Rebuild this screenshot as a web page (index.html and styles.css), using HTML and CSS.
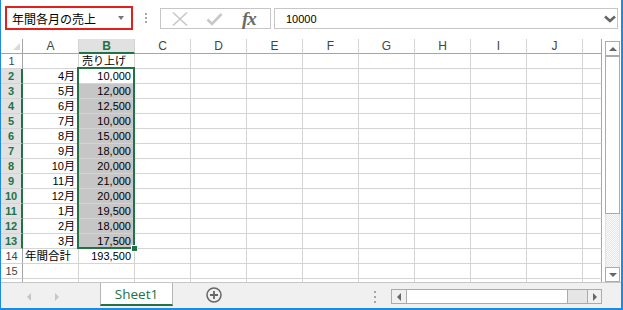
FILE: index.html
```html
<!DOCTYPE html>
<html lang="ja">
<head>
    <meta charset="UTF-8">
    <meta name="viewport" content="width=device-width, initial-scale=1.0">
    <title>年間各月の売上</title>
    <link rel="stylesheet" href="styles.css">
</head>
<body>
<div class="window">
    <div class="formula-bar">
        <div class="name-box">年間各月の売上<span class="drop"></span></div>
        <div class="grip"><i></i><i></i><i></i></div>
        <div class="fx-buttons">
            <svg class="btn-x" width="16" height="14" viewBox="0 0 16 14"><path d="M1 0.5 L15 13.5 M15 0.5 L1 13.5" stroke="#c8c8c8" stroke-width="1.5" fill="none"/></svg>
            <svg class="btn-ok" width="17" height="14" viewBox="0 0 17 14"><path d="M1.5 7.5 L6 12 L15.5 2" stroke="#c8c8c8" stroke-width="2.6" fill="none"/></svg>
            <span class="fx">fx</span>
        </div>
        <div class="formula-input">10000<svg class="chevron" width="12" height="8" viewBox="0 0 12 8"><polyline points="1,1.5 6,6 11,1.5" stroke="#666" stroke-width="2.6" fill="none"/></svg></div>
    </div>

    <div class="main">
        <div class="sheet">
            <div class="corner"></div><div class="hd">A</div><div class="hd on">B</div><div class="hd">C</div><div class="hd">D</div><div class="hd">E</div><div class="hd">F</div><div class="hd">G</div><div class="hd">H</div><div class="hd">I</div><div class="hd">J</div><div class="hd"></div>
            <div class="rh">1</div><div></div><div>売り上げ</div><div></div><div></div><div></div><div></div><div></div><div></div><div></div><div></div><div></div>
            <div class="rh on">2</div><div class="r">4月</div><div class="r">10,000</div><div></div><div></div><div></div><div></div><div></div><div></div><div></div><div></div><div></div>
            <div class="rh on">3</div><div class="r">5月</div><div class="r sel">12,000</div><div></div><div></div><div></div><div></div><div></div><div></div><div></div><div></div><div></div>
            <div class="rh on">4</div><div class="r">6月</div><div class="r sel">12,500</div><div></div><div></div><div></div><div></div><div></div><div></div><div></div><div></div><div></div>
            <div class="rh on">5</div><div class="r">7月</div><div class="r sel">10,000</div><div></div><div></div><div></div><div></div><div></div><div></div><div></div><div></div><div></div>
            <div class="rh on">6</div><div class="r">8月</div><div class="r sel">15,000</div><div></div><div></div><div></div><div></div><div></div><div></div><div></div><div></div><div></div>
            <div class="rh on">7</div><div class="r">9月</div><div class="r sel">18,000</div><div></div><div></div><div></div><div></div><div></div><div></div><div></div><div></div><div></div>
            <div class="rh on">8</div><div class="r">10月</div><div class="r sel">20,000</div><div></div><div></div><div></div><div></div><div></div><div></div><div></div><div></div><div></div>
            <div class="rh on">9</div><div class="r">11月</div><div class="r sel">21,000</div><div></div><div></div><div></div><div></div><div></div><div></div><div></div><div></div><div></div>
            <div class="rh on">10</div><div class="r">12月</div><div class="r sel">20,000</div><div></div><div></div><div></div><div></div><div></div><div></div><div></div><div></div><div></div>
            <div class="rh on">11</div><div class="r">1月</div><div class="r sel">19,500</div><div></div><div></div><div></div><div></div><div></div><div></div><div></div><div></div><div></div>
            <div class="rh on">12</div><div class="r">2月</div><div class="r sel">18,000</div><div></div><div></div><div></div><div></div><div></div><div></div><div></div><div></div><div></div>
            <div class="rh on">13</div><div class="r">3月</div><div class="r sel">17,500</div><div></div><div></div><div></div><div></div><div></div><div></div><div></div><div></div><div></div>
            <div class="rh">14</div><div class="jp">年間合計</div><div class="r">193,500</div><div></div><div></div><div></div><div></div><div></div><div></div><div></div><div></div><div></div>
            <div class="rh">15</div><div></div><div></div><div></div><div></div><div></div><div></div><div></div><div></div><div></div><div></div><div></div>
            <div class="rh"></div><div></div><div></div><div></div><div></div><div></div><div></div><div></div><div></div><div></div><div></div><div></div>
            <span class="sel-box"></span>
            <span class="fill-handle"></span>
        </div>
        <div class="vscroll">
            <div class="sb-btn"><span class="arr-up"></span></div>
            <div class="sb-thumb"></div>
            <div class="sb-track"></div>
            <div class="sb-btn"><span class="arr-down"></span></div>
        </div>
    </div>

    <div class="tab-bar">
        <span class="nav-left"></span>
        <span class="nav-right"></span>
        <div class="tab">Sheet1</div>
        <svg class="new-sheet" width="16" height="16" viewBox="0 0 16 16"><circle cx="8" cy="8" r="7" stroke="#666" stroke-width="1.5" fill="none"/><path d="M8 4 V12 M4 8 H12" stroke="#666" stroke-width="1.8"/></svg>
        <div class="grip tab-grip"><i></i><i></i><i></i></div>
        <div class="hscroll">
            <div class="hs-btn"><span class="arr-left"></span></div>
            <div class="hs-thumb"></div>
            <div class="hs-track"></div>
            <div class="hs-btn last"><span class="arr-right"></span></div>
        </div>
    </div>
</div>
</body>
</html>
```

FILE: styles.css
```css
body {
    margin: 0;
    background-color: white;
    font-family: "Noto Sans CJK JP", "Liberation Sans", sans-serif;
    font-size: 12px;
    color: black;
}
.window {
    width: 623px;
    height: 310px;
    box-sizing: border-box;
    border-left: 1px solid #1a8ce6;
    border-right: 2px solid #1a8ce6;
    border-bottom: 2px solid #1a8ce6;
    overflow: hidden;
}

/* formula bar */
.formula-bar {
    display: flex;
    align-items: flex-start;
    height: 39px;
    padding-left: 4px;
}
.name-box {
    display: flex;
    align-items: center;
    width: 128px;
    height: 24px;
    margin-top: 6px;
    padding-left: 5px;
    box-sizing: border-box;
    border: 2px solid #e2201c;
    font-size: 12px;
}
.drop {
    margin-left: auto;
    margin-right: 7px;
    border-top: 4px solid #777;
    border-left: 3.5px solid transparent;
    border-right: 3.5px solid transparent;
}
.grip {
    display: flex;
    flex-direction: column;
    gap: 2px;
    margin: 13px 0 0 12px;
}
.grip i {
    width: 2px;
    height: 2px;
    background-color: #a6a6a6;
}
.fx-buttons {
    display: flex;
    align-items: center;
    width: 111px;
    height: 21px;
    margin: 8px 0 0 13px;
    padding-left: 11px;
    box-sizing: border-box;
    border: 1px solid #c6c6c6;
}
.btn-ok { margin-left: 18px; }
.fx {
    margin-left: 19px;
    font-family: "Liberation Serif", serif;
    font-style: italic;
    font-weight: bold;
    font-size: 19px;
    line-height: 19px;
    color: #6a6a6a;
    letter-spacing: -1px;
}
.formula-input {
    display: flex;
    align-items: center;
    width: 344px;
    height: 21px;
    margin: 8px 0 0 3px;
    padding-left: 11px;
    box-sizing: border-box;
    border: 1px solid #c6c6c6;
    font-family: "Liberation Sans", sans-serif;
    font-size: 11px;
}
.chevron {
    margin-left: auto;
    margin-right: 1px;
}

/* grid */
.main {
    display: flex;
    height: 243px;
}
.sheet {
    position: relative;
    display: grid;
    grid-template-columns: 22px repeat(10, 56px) 19px;
    grid-auto-rows: 15px;
    width: 601px;
    height: 243px;
    overflow: hidden;
    font-family: "Liberation Sans", "Noto Sans CJK JP", sans-serif;
    font-size: 11px;
}
.sheet > div {
    box-sizing: border-box;
    border-right: 1px solid #d4d4d4;
    border-bottom: 1px solid #d4d4d4;
    padding: 0 3px;
    line-height: 14px;
    white-space: nowrap;
}
.sheet > div:nth-child(12n) { border-right-color: #a6a6a6; }
.sheet .r { text-align: right; }
.sheet .jp { padding-left: 2px; font-size: 11.5px; }
.sheet .sel { background-color: #c6c6c6; }
.sheet .corner {
    position: relative;
    border-right-color: #a6a6a6;
    border-bottom-color: #a6a6a6;
}
.corner::after {
    content: "";
    position: absolute;
    left: 12px;
    top: 4px;
    border-bottom: 7px solid #dadada;
    border-left: 7px solid transparent;
}
.sheet .hd {
    padding: 0;
    text-align: center;
    color: #444;
    font-size: 12px;
    border-bottom-color: #a6a6a6;
}
.sheet .rh {
    padding: 0;
    text-align: center;
    color: #444;
    border-right-color: #a6a6a6;
}
.sheet .hd.on {
    background-color: #e1e1e1;
    color: #217346;
    font-weight: bold;
    border-bottom: 2px solid #217346;
}
.sheet .rh.on {
    background-color: #e1e1e1;
    color: #217346;
    font-weight: bold;
    border-right: 2px solid #217346;
}
.sel-box {
    position: absolute;
    left: 76px;
    top: 28px;
    width: 58px;
    height: 182px;
    box-sizing: border-box;
    border: 2px solid #217346;
}
.fill-handle {
    position: absolute;
    left: 130px;
    top: 206px;
    width: 5px;
    height: 5px;
    background-color: #217346;
    border: 1px solid white;
}

/* vertical scrollbar */
.vscroll {
    display: flex;
    flex-direction: column;
    width: 15px;
    height: 241px;
    margin: 2px 0 0 3px;
}
.sb-btn {
    display: flex;
    align-items: center;
    justify-content: center;
    height: 15px;
    box-sizing: border-box;
    border: 1px solid #ababab;
}
.sb-thumb {
    height: 158px;
    box-sizing: border-box;
    border: 1px solid #ababab;
    background-color: white;
}
.sb-track {
    flex: 1;
    border-left: 1px solid #e3e3e3;
    border-right: 1px solid #e3e3e3;
    background-image: repeating-conic-gradient(#e6e6e6 0 25%, #fafafa 0 50%);
    background-size: 2px 2px;
}
.arr-up {
    border-bottom: 4px solid #666;
    border-left: 4px solid transparent;
    border-right: 4px solid transparent;
}
.arr-down {
    border-top: 4px solid #666;
    border-left: 4px solid transparent;
    border-right: 4px solid transparent;
}

/* sheet tabs */
.tab-bar {
    display: flex;
    align-items: flex-start;
    height: 26px;
    box-sizing: border-box;
    border-top: 1px solid #c6c6c6;
    background-color: #f0f0f0;
}
.nav-left, .nav-right {
    margin-top: 10px;
    border-top: 4px solid transparent;
    border-bottom: 4px solid transparent;
}
.nav-left {
    margin-left: 26px;
    border-right: 4px solid #c6c6c6;
}
.nav-right {
    margin-left: 24px;
    border-left: 4px solid #c6c6c6;
}
.tab {
    width: 73px;
    height: 23px;
    margin-left: 41px;
    padding-top: 2px;
    box-sizing: border-box;
    background-color: white;
    border-left: 1px solid #b4b4b4;
    border-right: 1px solid #b4b4b4;
    border-bottom: 2px solid #217346;
    font-family: "Open Sans", sans-serif;
    font-size: 13.5px;
    line-height: 18px;
    text-align: center;
    color: #217346;
}
.new-sheet {
    margin: 4px 0 0 33px;
}
.tab-grip {
    gap: 3px;
    margin: 8px 0 0 152px;
}
.hscroll {
    display: flex;
    width: 211px;
    height: 15px;
    margin: 6px 0 0 15px;
    box-sizing: border-box;
    border: 1px solid #ababab;
}
.hs-btn {
    display: flex;
    align-items: center;
    justify-content: center;
    width: 14px;
    border-right: 1px solid #ababab;
}
.hs-btn.last {
    width: 13px;
    border-right: none;
    border-left: 1px solid #ababab;
}
.hs-thumb {
    width: 160px;
    border-right: 1px solid #ababab;
    background-color: white;
}
.hs-track {
    flex: 1;
    background-color: #e6e6e6;
}
.arr-left {
    border-right: 4px solid #666;
    border-top: 4px solid transparent;
    border-bottom: 4px solid transparent;
}
.arr-right {
    border-left: 4px solid #666;
    border-top: 4px solid transparent;
    border-bottom: 4px solid transparent;
}
```
